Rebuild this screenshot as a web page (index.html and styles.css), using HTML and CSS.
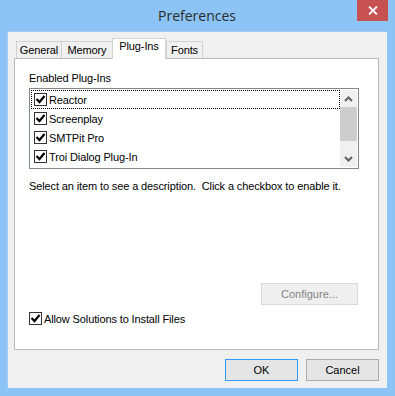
FILE: index.html
```html
<!DOCTYPE html>
<html lang="en">
<head>
    <meta charset="UTF-8">
    <title>Preferences</title>
    <link rel="stylesheet" href="styles.css">
</head>
<body>

<div class="window">
    <div class="titlebar">
        <span class="title">Preferences</span>
        <button class="close" aria-label="Close">
            <svg width="10" height="9" viewBox="0 0 10 9"><path d="M1 0.5 L9 8.5 M9 0.5 L1 8.5" stroke="#fff" stroke-width="1.8"/></svg>
        </button>
    </div>

    <div class="client">
        <div class="tabs">
            <div class="tab">General</div>
            <div class="tab">Memory</div>
            <div class="tab active">Plug-Ins</div>
            <div class="tab">Fonts</div>
        </div>

        <div class="panel">
            <div class="label">Enabled Plug-Ins</div>

            <div class="listbox">
                <div class="items">
                    <div class="item focus"><span class="check"></span>Reactor</div>
                    <div class="item"><span class="check"></span>Screenplay</div>
                    <div class="item"><span class="check"></span>SMTPit Pro</div>
                    <div class="item"><span class="check"></span>Troi Dialog Plug-In</div>
                </div>
                <div class="scrollbar">
                    <div class="arrow">
                        <svg width="9" height="6" viewBox="0 0 9 6"><path d="M1 5 L4.5 1.5 L8 5" fill="none" stroke="#606060" stroke-width="2"/></svg>
                    </div>
                    <div class="thumb"></div>
                    <div class="track"></div>
                    <div class="arrow">
                        <svg width="9" height="6" viewBox="0 0 9 6"><path d="M1 1 L4.5 4.5 L8 1" fill="none" stroke="#606060" stroke-width="2"/></svg>
                    </div>
                </div>
            </div>

            <div class="desc">Select an item to see a description.&nbsp; Click a checkbox to enable it.</div>

            <button class="btn configure" disabled>Configure...</button>

            <div class="option"><span class="check"></span>Allow Solutions to Install Files</div>
        </div>

        <div class="actions">
            <button class="btn default">OK</button>
            <button class="btn">Cancel</button>
        </div>
    </div>
</div>

</body>
</html>
```

FILE: styles.css
```css
* {
    margin: 0;
    padding: 0;
    box-sizing: border-box;
}

body {
    background-color: #8cc4f5;
    font-family: 'Liberation Sans', Arial, sans-serif;
    font-size: 11px;
    letter-spacing: -0.12px;
    color: #000;
}

.window {
    width: 395px;
    height: 396px;
    background-color: #8cc4f5;
    padding: 0 8px 8px 7px;
    display: flex;
    flex-direction: column;
}

.titlebar {
    height: 31px;
    position: relative;
    display: flex;
    justify-content: center;
}

.title {
    font-family: 'Open Sans', 'Noto Sans', sans-serif;
    font-size: 14px;
    letter-spacing: 0;
    color: #2b2b2b;
    line-height: 31px;
}

.close {
    position: absolute;
    top: 0;
    right: -1px;
    width: 31px;
    height: 21px;
    border: none;
    background-color: #c75050;
    display: flex;
    align-items: center;
    justify-content: center;
}

.client {
    flex: 1;
    background-color: #f0f0f0;
    border-left: 1px solid #a3cdf0;
    border-top: 1px solid #a3cdf0;
    padding: 9px 8px 0 6px;
    display: flex;
    flex-direction: column;
}

.tabs {
    display: flex;
    height: 17px;
    padding-left: 2px;
    position: relative;
    z-index: 1;
}

.tab {
    height: 17px;
    border: 1px solid #d3d3d3;
    border-bottom: none;
    border-right: none;
    background-color: #f0f0f0;
    text-align: center;
    line-height: 17px;
    white-space: nowrap;
}

.tab:nth-child(1) { width: 45px; }
.tab:nth-child(2) { width: 51px; }
.tab:nth-child(4) { width: 37px; border-right: 1px solid #d3d3d3; }

.tab.active {
    width: 54px;
    height: 21px;
    margin-top: -3px;
    background-color: #fff;
    border: 1px solid #d3d3d3;
    border-bottom: none;
    line-height: 15px;
}

.panel {
    height: 292px;
    background-color: #fff;
    border: 1px solid #b9b9b9;
    padding: 0 19px 0 14px;
    display: flex;
    flex-direction: column;
}

.label {
    margin-top: 13px;
    line-height: 13px;
}

.listbox {
    margin-top: 3px;
    height: 81px;
    border: 1px solid #828790;
    display: flex;
    padding: 1px;
}

.items {
    flex: 1;
}

.item {
    height: 19px;
    display: flex;
    align-items: center;
    padding-left: 3px;
}

.item.focus {
    outline: 1px dotted #000;
    outline-offset: -1px;
}

.check {
    width: 13px;
    height: 13px;
    border: 1px solid #333;
    background: #fff url("data:image/svg+xml,%3Csvg xmlns='http://www.w3.org/2000/svg' width='11' height='11'%3E%3Cpath d='M1.5 5 L4.5 8 L9.5 2' fill='none' stroke='%23000' stroke-width='2.2'/%3E%3C/svg%3E") no-repeat center;
    margin-right: 2px;
    flex-shrink: 0;
}

.scrollbar {
    width: 17px;
    background-color: #f0f0f0;
    display: flex;
    flex-direction: column;
}

.arrow {
    height: 17px;
    display: flex;
    align-items: center;
    justify-content: center;
}

.thumb {
    height: 34px;
    background-color: #cdcdcd;
}

.track {
    flex: 1;
}

.desc {
    margin-top: 11px;
    line-height: 13px;
}

.btn {
    font-family: 'Liberation Sans', Arial, sans-serif;
    font-size: 11px;
    height: 22px;
    width: 73px;
    background-color: #e5e5e5;
    border: 1px solid #acacac;
    color: #000;
}

.btn.default {
    border-color: #3399ff;
}

.configure {
    align-self: flex-end;
    width: 97px;
    margin-top: 90px;
    margin-right: 1px;
    background-color: #efefef;
    border-color: #d9d9d9;
    color: #838383;
}

.option {
    margin-top: 6px;
    display: flex;
    align-items: center;
    height: 15px;
}

.actions {
    display: flex;
    justify-content: flex-end;
    gap: 8px;
    margin-top: 9px;
}
```
